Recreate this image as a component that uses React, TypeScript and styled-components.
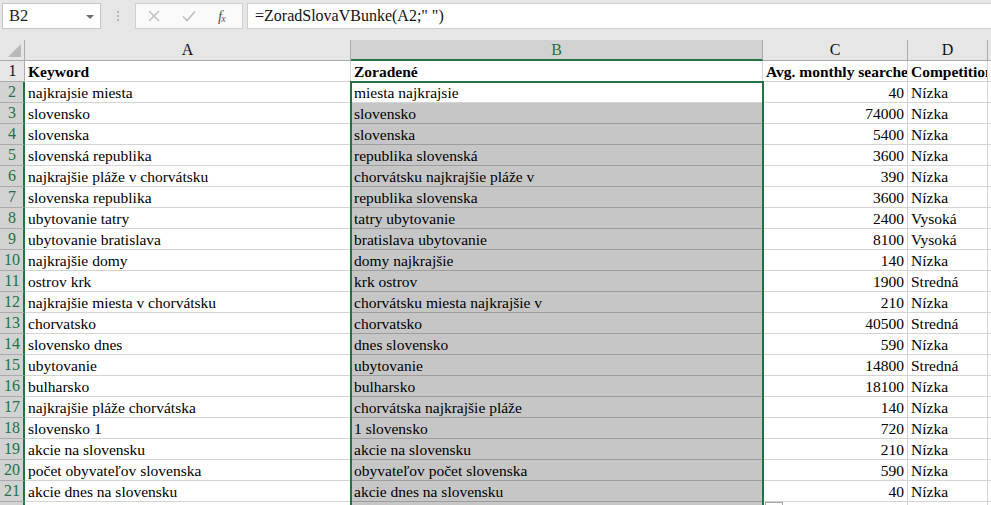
import styled, { createGlobalStyle } from 'styled-components';

const GlobalStyle = createGlobalStyle`
  html, body {
    margin: 0;
    padding: 0;
    background: #e6e6e6;
    overflow: hidden;
  }
  body {
    font-family: "Liberation Serif", "Times New Roman", serif;
  }
`;

const GREEN = '#217346';

const rows: [string, string, number, string][] = [
  ['najkrajsie miesta', 'miesta najkrajsie', 40, 'Nízka'],
  ['slovensko', 'slovensko', 74000, 'Nízka'],
  ['slovenska', 'slovenska', 5400, 'Nízka'],
  ['slovenská republika', 'republika slovenská', 3600, 'Nízka'],
  ['najkrajšie pláže v chorvátsku', 'chorvátsku najkrajšie pláže v', 390, 'Nízka'],
  ['slovenska republika', 'republika slovenska', 3600, 'Nízka'],
  ['ubytovanie tatry', 'tatry ubytovanie', 2400, 'Vysoká'],
  ['ubytovanie bratislava', 'bratislava ubytovanie', 8100, 'Vysoká'],
  ['najkrajšie domy', 'domy najkrajšie', 140, 'Nízka'],
  ['ostrov krk', 'krk ostrov', 1900, 'Stredná'],
  ['najkrajšie miesta v chorvátsku', 'chorvátsku miesta najkrajšie v', 210, 'Nízka'],
  ['chorvatsko', 'chorvatsko', 40500, 'Stredná'],
  ['slovensko dnes', 'dnes slovensko', 590, 'Nízka'],
  ['ubytovanie', 'ubytovanie', 14800, 'Stredná'],
  ['bulharsko', 'bulharsko', 18100, 'Nízka'],
  ['najkrajšie pláže chorvátska', 'chorvátska najkrajšie pláže', 140, 'Nízka'],
  ['slovensko 1', '1 slovensko', 720, 'Nízka'],
  ['akcie na slovensku', 'akcie na slovensku', 210, 'Nízka'],
  ['počet obyvateľov slovenska', 'obyvateľov počet slovenska', 590, 'Nízka'],
  ['akcie dnes na slovensku', 'akcie dnes na slovensku', 40, 'Nízka'],
];

const Page = styled.div`
  width: 991px;
  height: 505px;
  overflow: hidden;
  background: #e6e6e6;
`;

const FormulaBar = styled.div`
  display: flex;
  align-items: stretch;
  height: 26px;
  padding: 3px 0 0 2px;
  margin-bottom: 11px;
`;

const NameBox = styled.div`
  width: 99px;
  box-sizing: border-box;
  border: 1px solid #c6c6c6;
  background: #fff;
  display: flex;
  align-items: center;
  justify-content: space-between;
  padding: 0 6px 0 6px;
  font-size: 16.5px;
  color: #222;
`;

const Caret = styled.span`
  width: 0;
  height: 0;
  border-left: 4px solid transparent;
  border-right: 4px solid transparent;
  border-top: 4px solid #6e6e6e;
  margin-top: 1px;
`;

const Grip = styled.div`
  width: 34px;
  display: flex;
  flex-direction: column;
  align-items: center;
  justify-content: center;
  gap: 2px;
  span {
    width: 2px;
    height: 2px;
    background: #b4b4b4;
  }
`;

const ToolBox = styled.div`
  width: 108px;
  box-sizing: border-box;
  border: 1px solid #d0d0d0;
  background: #fafafa;
  display: flex;
  align-items: center;
  padding: 0 0 0 12px;
  gap: 22px;
`;

const Fx = styled.span`
  font-style: italic;
  font-size: 15px;
  color: #555;
  letter-spacing: -1px;
  sub {
    font-size: 10px;
    vertical-align: -1px;
  }
`;

const FormulaInput = styled.div`
  flex: 1;
  margin-left: 4px;
  box-sizing: border-box;
  border: 1px solid #d0d0d0;
  border-right: none;
  background: #fff;
  display: flex;
  align-items: center;
  padding-left: 7px;
  font-size: 16px;
  color: #111;
  white-space: pre;
`;

const Sheet = styled.div`
  position: relative;
  display: grid;
  grid-template-columns: 25px 326px 412px 145px 80px 80px;
  grid-auto-rows: 21px;
  background: #fff;
  font-size: 15.5px;
`;

const Corner = styled.div`
  background: #e6e6e6;
  border-right: 1px solid #ababab;
  border-bottom: 1px solid #ababab;
  position: relative;
  &::after {
    content: '';
    position: absolute;
    right: 3px;
    bottom: 3px;
    width: 0;
    height: 0;
    border-left: 13px solid transparent;
    border-bottom: 13px solid #b9b9b9;
  }
`;

const ColHead = styled.div<{ $active?: boolean }>`
  background: ${(p) => (p.$active ? '#d2d2d2' : '#e6e6e6')};
  color: ${(p) => (p.$active ? GREEN : '#111')};
  border-right: 1px solid #ababab;
  border-bottom: ${(p) => (p.$active ? `2px solid ${GREEN}` : '1px solid #ababab')};
  box-sizing: border-box;
  display: flex;
  align-items: center;
  justify-content: center;
  font-size: 16px;
  line-height: 1;
  padding-top: ${(p) => (p.$active ? '1px' : '0')};
`;

const RowHead = styled.div<{ $active?: boolean }>`
  background: ${(p) => (p.$active ? '#d2d2d2' : '#e6e6e6')};
  color: ${(p) => (p.$active ? GREEN : '#111')};
  border-right: ${(p) => (p.$active ? `2px solid ${GREEN}` : '1px solid #ababab')};
  border-bottom: 1px solid #ababab;
  box-sizing: border-box;
  display: flex;
  align-items: center;
  justify-content: center;
  font-size: 16px;
  padding-left: 1px;
`;

const Cell = styled.div<{ $bold?: boolean; $num?: boolean; $sel?: boolean }>`
  box-sizing: border-box;
  border-right: 1px solid ${(p) => (p.$sel ? '#9e9e9e' : '#d4d4d4')};
  border-bottom: 1px solid ${(p) => (p.$sel ? '#9e9e9e' : '#d4d4d4')};
  background: ${(p) => (p.$sel ? '#c6c6c6' : '#fff')};
  padding: 0 ${(p) => (p.$num ? '3px' : '2px')} 0 3px;
  font-weight: ${(p) => (p.$bold ? 700 : 400)};
  text-align: ${(p) => (p.$num ? 'right' : 'left')};
  line-height: 21px;
  white-space: nowrap;
  overflow: hidden;
  color: #000;
`;

const Selection = styled.div`
  position: absolute;
  left: 350px;
  top: 41px;
  width: 414px;
  height: 480px;
  box-sizing: border-box;
  border: 2px solid ${GREEN};
  pointer-events: none;
`;

const PasteTag = styled.div`
  position: absolute;
  left: 765px;
  top: 462px;
  width: 18px;
  height: 14px;
  box-sizing: border-box;
  border: 1px solid #a6a6a6;
  background: #fff;
  &::after {
    content: '';
    position: absolute;
    left: 3px;
    top: 2px;
    width: 10px;
    height: 3px;
    background: #9a9a9a;
  }
`;

const cols = ['A', 'B', 'C', 'D', 'E'];

export default function App() {
  return (
    <Page>
      <GlobalStyle />
      <FormulaBar>
        <NameBox>
          B2
          <Caret />
        </NameBox>
        <Grip>
          <span />
          <span />
          <span />
        </Grip>
        <ToolBox>
          <svg width="12" height="12" viewBox="0 0 12 12">
            <path d="M1 1 L11 11 M11 1 L1 11" stroke="#bdbdbd" strokeWidth="1.4" fill="none" />
          </svg>
          <svg width="14" height="12" viewBox="0 0 14 12">
            <path d="M1 6.5 L5 10.5 L13 1.5" stroke="#bdbdbd" strokeWidth="1.6" fill="none" />
          </svg>
          <Fx>
            f<sub>x</sub>
          </Fx>
        </ToolBox>
        <FormulaInput>=ZoradSlovaVBunke(A2;" ")</FormulaInput>
      </FormulaBar>

      <Sheet>
        <Corner />
        {cols.map((c) => (
          <ColHead key={c} $active={c === 'B'}>
            {c}
          </ColHead>
        ))}

        <RowHead>1</RowHead>
        <Cell $bold>Keyword</Cell>
        <Cell $bold>Zoradené</Cell>
        <Cell $bold>Avg. monthly searches</Cell>
        <Cell $bold>Competition</Cell>
        <Cell />

        {rows.map(([kw, sorted, vol, comp], i) => (
          <RowLine key={i} n={i + 2} kw={kw} sorted={sorted} vol={vol} comp={comp} />
        ))}

        <RowHead $active>22</RowHead>
        <Cell />
        <Cell $sel />
        <Cell />
        <Cell />
        <Cell />

        <Selection />
        <PasteTag />
      </Sheet>
    </Page>
  );
}

function RowLine({ n, kw, sorted, vol, comp }: { n: number; kw: string; sorted: string; vol: number; comp: string }) {
  return (
    <>
      <RowHead $active>{n}</RowHead>
      <Cell>{kw}</Cell>
      <Cell $sel={n !== 2}>{sorted}</Cell>
      <Cell $num>{vol}</Cell>
      <Cell>{comp}</Cell>
      <Cell />
    </>
  );
}
